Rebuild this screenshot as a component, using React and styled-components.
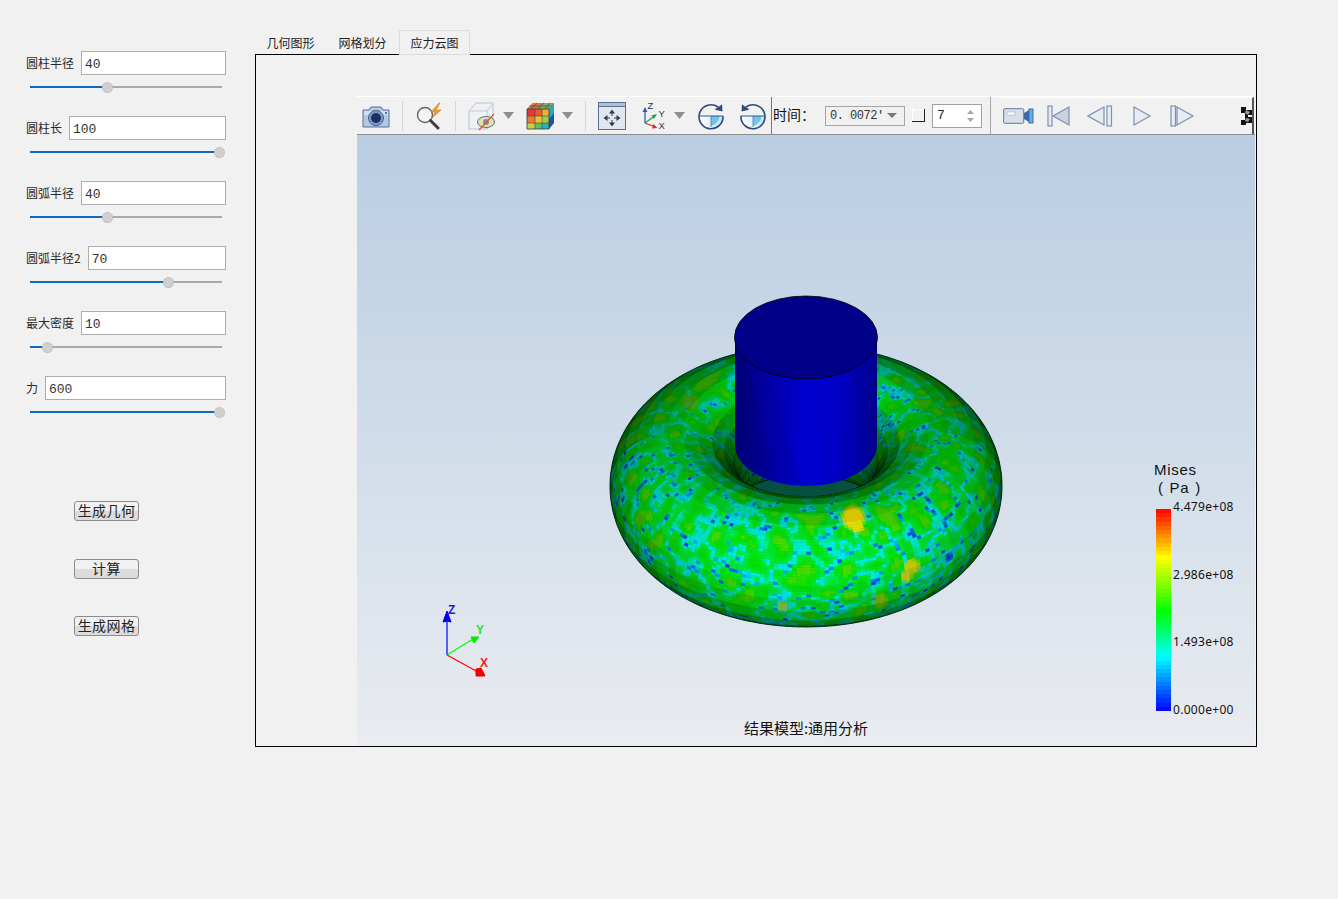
import React from "react";
import styled, { createGlobalStyle } from "styled-components";

const CJK = `"Noto Sans CJK SC", "Noto Sans", sans-serif`;
const MONO = `"Liberation Mono", "Noto Sans CJK SC", monospace`;

const Global = createGlobalStyle`
  html, body { margin: 0; padding: 0; background: #f1f1f1; height: 100%; }
  body { font-family: ${CJK}; color: #222; overflow: hidden; }
`;

const Page = styled.div`
  display: grid;
  grid-template-columns: 255px 1002px;
  width: 1338px;
  height: 899px;
`;
const Sidebar = styled.aside`
  display: flex;
  flex-direction: column;
  padding: 51px 0 0 26px;
  width: 200px;
`;
const Group = styled.div`
  display: flex;
  flex-direction: column;
  height: 65px;
`;
const Field = styled.label`
  display: flex;
  align-items: center;
  gap: 7px;
  height: 24px;
  font-size: 12px;
  line-height: 22px;
  color: #2a2a2a;
  white-space: nowrap;
`;
const FieldText = styled.span`
  margin-bottom: 1px;
`;
const NumInput = styled.input`
  flex: 1;
  min-width: 0;
  height: 24px;
  box-sizing: border-box;
  border: 1px solid #adadad;
  background: #fff;
  padding: 2px 3px 0;
  font: 13px ${MONO};
  color: #333;
  outline: none;
`;
const Slider = styled.div`
  position: relative;
  margin: 11px 0 0 4px;
  width: 192px;
  height: 2px;
  background: #a9a9a9;
`;
const SliderFill = styled.div`
  height: 100%;
  background: #0d6bbd;
`;
const SliderKnob = styled.div`
  position: absolute;
  top: -4.5px;
  margin-left: -5.5px;
  width: 11px;
  height: 11px;
  box-sizing: border-box;
  border-radius: 50%;
  background: #cfcfcf;
  border: 1px dotted #b5b5b5;
`;
const Actions = styled.div`
  display: flex;
  flex-direction: column;
  margin: 60px 0 0 48px;
`;
const ActionButton = styled.button`
  width: 65px;
  height: 20px;
  margin-bottom: ${(p) => p.$mb}px;
  padding: 0 0 2px;
  box-sizing: border-box;
  border: 1px solid #8c8c8c;
  border-radius: 3px;
  background: linear-gradient(#f1f1f1 0 50%, #dcdcdc 50% 100%);
  font: 14px/15px ${CJK};
  letter-spacing: 0.4px;
  color: #222;
`;

const Main = styled.main`
  display: flex;
  flex-direction: column;
  padding-top: 30px;
`;
const Tabs = styled.div`
  display: flex;
  height: 24px;
  position: relative;
  z-index: 1;
`;
const Tab = styled.div`
  width: 71px;
  margin-right: 1px;
  height: ${(p) => (p.$active ? 25 : 24)}px;
  box-sizing: border-box;
  text-align: center;
  font-size: 12px;
  color: #222;
  background: ${(p) => (p.$active ? "#f1f1f1" : "transparent")};
  border: ${(p) => (p.$active ? "1px solid #dcdcdc" : "none")};
  line-height: ${(p) => (p.$active ? 24 : 26)}px;
`;
const Frame = styled.section`
  box-sizing: border-box;
  height: 693px;
  border: 1px solid #000;
  padding: 41px 1px 0 101px;
  display: flex;
  flex-direction: column;
`;
const Toolbar = styled.div`
  display: flex;
  align-items: center;
  height: 39px;
  flex: none;
  box-sizing: border-box;
  border-top: 1px solid #fff;
  border-bottom: 1px solid #8d8d8d;
  background: #f1f1f1;
`;
const Tool = styled.div`
  flex: none;
  width: ${(p) => p.$w}px;
  margin-left: ${(p) => p.$ml}px;
  display: flex;
  align-items: center;
  justify-content: center;
  svg { display: block; }
`;
const Sep = styled.div`
  flex: none;
  width: 1px;
  height: 30px;
  margin-left: ${(p) => p.$ml}px;
  background: #d6d6d6;
`;
const Bar = styled.div`
  flex: none;
  align-self: stretch;
  width: 1px;
  margin-left: ${(p) => p.$ml}px;
  background: ${(p) => p.$c};
`;
const TimeLabel = styled.span`
  flex: none;
  width: 38px;
  margin: 0 0 3px 1px;
  font-size: 14px;
  line-height: 20px;
  color: #111;
  white-space: nowrap;
`;
const Combo = styled.div`
  flex: none;
  box-sizing: border-box;
  width: 80px;
  height: 20px;
  margin-left: 14px;
  border: 1px solid #a5a5a5;
  display: flex;
  align-items: center;
  justify-content: space-between;
  padding: 0 7px 0 4px;
  font: 12px ${MONO};
  letter-spacing: -0.5px;
  color: #333;
  white-space: pre;
  overflow: hidden;
`;
const ComboArrow = styled.i`
  flex: none;
  width: 0;
  height: 0;
  border-left: 5px solid transparent;
  border-right: 5px solid transparent;
  border-top: 5px solid #777;
`;
const Check = styled.div`
  flex: none;
  box-sizing: border-box;
  width: 13px;
  height: 13px;
  margin-left: 7px;
  border-right: 1.5px solid #222;
  border-bottom: 1.5px solid #222;
  box-shadow: inset 1px 1px 0 #fff;
`;
const Spin = styled.div`
  flex: none;
  box-sizing: border-box;
  width: 50px;
  height: 24px;
  margin-left: 7px;
  background: #fff;
  border: 1px solid #a0a0a0;
  display: flex;
  align-items: center;
  justify-content: space-between;
  padding: 0 7px 0 4px;
  font: 13px ${MONO};
  color: #222;
`;
const PlayBar = styled.div`
  flex: 1;
  align-self: stretch;
  margin-left: 8px;
  display: flex;
  align-items: center;
  border-top: 1px solid #fff;
  border-right: 2px solid #555;
  margin-right: 1px;
`;

const Viewport = styled.div`
  position: relative;
  flex: 1;
  background: linear-gradient(#b9cde3, #e9ecf0);
  overflow: hidden;
`;
const Scene = styled.svg`
  position: absolute;
  inset: 0;
  width: 100%;
  height: 100%;
`;
const Caption = styled.div`
  position: absolute;
  left: 0;
  right: 0;
  bottom: 8px;
  text-align: center;
  font-size: 15px;
  line-height: 20px;
  color: #111;
`;
const Legend = styled.div`
  position: absolute;
  left: 797px;
  top: 326px;
  display: flex;
  flex-direction: column;
  color: #111;
`;
const LegendTitle = styled.div`
  font-family: "Liberation Sans", sans-serif;
  font-size: 15px;
  letter-spacing: 0.7px;
  line-height: 17.5px;
  padding-left: ${(p) => p.$indent}px;
  word-spacing: 1px;
  white-space: nowrap;
`;
const LegendBody = styled.div`
  display: flex;
  height: 202px;
  margin: 13px 0 0 2px;
  font-family: "Noto Sans", sans-serif;
`;
const LegendBar = styled.div`
  width: 15px;
  height: 100%;
`;
const LegendTicks = styled.div`
  display: flex;
  flex-direction: column;
  justify-content: space-between;
  margin: -8px 0 -5px 2px;
  font-size: 12px;
  line-height: 12px;
  letter-spacing: 0.3px;
`;

/* ---------- torus mesh ---------- */
const hash3 = (i, j, k) => {
  const s = Math.sin(i * 127.1 + j * 311.7 + k * 74.7) * 43758.5453;
  return s - Math.floor(s);
};
const smooth = (f) => f * f * (3 - 2 * f);
const noise3 = (x, y, z) => {
  const i = Math.floor(x), j = Math.floor(y), k = Math.floor(z);
  const fx = smooth(x - i), fy = smooth(y - j), fz = smooth(z - k);
  const lerp = (a, b, t) => a + (b - a) * t;
  return lerp(
    lerp(
      lerp(hash3(i, j, k), hash3(i + 1, j, k), fx),
      lerp(hash3(i, j + 1, k), hash3(i + 1, j + 1, k), fx),
      fy
    ),
    lerp(
      lerp(hash3(i, j, k + 1), hash3(i + 1, j, k + 1), fx),
      lerp(hash3(i, j + 1, k + 1), hash3(i + 1, j + 1, k + 1), fx),
      fy
    ),
    fz
  );
};
const field = (X, Y, Z) => {
  // rotated domain so the lattice does not show
  const x = 0.71 * X + 0.55 * Y - 0.43 * Z;
  const y = -0.63 * X + 0.77 * Y + 0.1 * Z;
  const z = 0.31 * X + 0.32 * Y + 0.89 * Z;
  return (
    noise3(x / 15 + 11, y / 15 + 5, z / 15 + 3) * 0.78 +
    noise3(y / 7 + 2, z / 7 + 9, x / 7 + 4) * 0.22
  );
};
const STOPS = [
  [0, [20, 50, 225]],
  [0.014, [0, 110, 228]],
  [0.05, [0, 225, 238]],
  [0.11, [0, 235, 220]],
  [0.24, [0, 228, 60]],
  [0.75, [0, 222, 0]],
  [1, [70, 215, 0]],
];
const ramp = (t) => {
  for (let k = 1; k < STOPS.length; k++) {
    if (t <= STOPS[k][0]) {
      const [a, ca] = STOPS[k - 1];
      const [b, cb] = STOPS[k];
      const f = (t - a) / (b - a);
      return ca.map((c, n) => c + (cb[n] - c) * f);
    }
  }
  return STOPS[STOPS.length - 1][1];
};
const HOT = [
  [853, 518, 14, [250, 225, 0], 1],
  [857, 527, 8, [225, 230, 0], 1],
  [912, 566, 9, [215, 215, 0], 1],
  [906, 576, 7, [225, 210, 0], 0.9],
  [783, 606, 6, [200, 195, 0], 0.7],
  [880, 600, 9, [180, 195, 0], 0.6],
  [690, 402, 10, [160, 175, 0], 0.5],
];
const R = 131, r = 65, CX = 806, CY = 486;
const sinT = 0.58, cosT = Math.sqrt(1 - sinT * sinT);
const buildTorus = () => {
  const NU = 260, NV = 130, FU = 44, FV = 26;
  const project = (u, v) => {
    const w = R + r * Math.cos(v);
    const X = w * Math.cos(u), Y = w * Math.sin(u), Z = r * Math.sin(v);
    return [CX + X, CY + Y * sinT - Z * cosT, Y * cosT + Z * sinT];
  };
  const polys = [];
  for (let i = 0; i < NU; i++) {
    for (let j = 0; j < NV; j++) {
      const u0 = (i / NU) * 2 * Math.PI, u1 = ((i + 1) / NU) * 2 * Math.PI;
      const v0 = (j / NV) * 2 * Math.PI, v1 = ((j + 1) / NV) * 2 * Math.PI;
      const um = (u0 + u1) / 2, vm = (v0 + v1) / 2;
      const facing = Math.cos(vm) * Math.sin(um) * cosT + Math.sin(vm) * sinT;
      if (facing < -0.08) continue;
      const a = project(u0, v0), b = project(u1, v0), c = project(u1, v1), d = project(u0, v1);
      const sx = (a[0] + c[0]) / 2, sy = (a[1] + c[1]) / 2;
      if (sx > 742 && sx < 870 && sy < 470) continue;
      // flat shading over a coarse facet grid
      const fu = (Math.floor((i / NU) * FU) + 0.5) / FU * 2 * Math.PI;
      const fv = (Math.floor((j / NV) * FV) + 0.5) / FV * 2 * Math.PI;
      const nx = Math.cos(fv) * Math.cos(fu);
      const ny = Math.cos(fv) * Math.sin(fu);
      const nz = Math.sin(fv);
      const ndv = Math.max(0, ny * cosT + nz * sinT);
      let shade = 0.14 + 0.92 * Math.pow(ndv, 0.72);
      const inner = Math.min(1, Math.max(0, (-Math.cos(fv) - 0.4) / 0.45));
      shade *= 1 - 0.3 * smooth(inner);
      if (ny < 0) shade *= 0.94;
      shade = Math.min(1.02, shade);
      const w = R + r * Math.cos(vm);
      const n1 = field(w * Math.cos(um), w * Math.sin(um), r * Math.sin(vm));
      let t = Math.min(1, Math.abs(n1 - 0.5) * 3.4);
      if (ny < 0) t = Math.min(1, t + 0.08);
      let col = ramp(t);
      for (const [hx, hy, hr, hc, hw] of HOT) {
        const dd = Math.hypot(sx - hx, sy - hy) / hr;
        if (dd < 1) {
          const mix = hw * Math.min(1, (1 - dd) * 2.6);
          col = col.map((q, n) => q + (hc[n] - q) * mix);
        }
      }
      const [rr, gg, bb] = col.map((q) => Math.round(Math.min(255, q * shade)));
      polys.push({
        z: (a[2] + c[2]) / 2,
        p: [a, b, c, d].map((q) => `${q[0].toFixed(1)},${q[1].toFixed(1)}`).join(" "),
        f: `rgb(${rr},${gg},${bb})`,
      });
    }
  }
  polys.sort((p, q) => p.z - q.z);
  return polys;
};
const TORUS = buildTorus();

// silhouette: parallel curve of the projected centre circle
const OUTLINE = Array.from({ length: 240 }, (_, i) => {
  const a = (i / 240) * 2 * Math.PI;
  const ex = R * Math.cos(a), ey = R * sinT * Math.sin(a);
  const nx = sinT * Math.cos(a), ny = Math.sin(a);
  const l = Math.hypot(nx, ny);
  return `${(CX + ex + (r * nx) / l).toFixed(1)},${(CY + ey + (r * ny) / l).toFixed(1)}`;
}).join(" ");

const rainbow = (t) => {
  const k = [
    [0, [0, 0, 255]],
    [0.27, [0, 255, 255]],
    [0.49, [0, 255, 0]],
    [0.76, [255, 255, 0]],
    [1, [255, 0, 0]],
  ];
  for (let i = 1; i < k.length; i++) {
    if (t <= k[i][0]) {
      const f = (t - k[i - 1][0]) / (k[i][0] - k[i - 1][0]);
      return k[i - 1][1].map((c, n) => Math.round(c + (k[i][1][n] - c) * f));
    }
  }
  return [255, 0, 0];
};
const BANDS = 48;
const LEGEND_BG = `linear-gradient(to top, ${Array.from({ length: BANDS }, (_, i) => {
  const c = rainbow((i + 0.5) / BANDS);
  return `rgb(${c}) ${(i / BANDS) * 100}% ${((i + 1) / BANDS) * 100}%`;
}).join(", ")})`;

/* ---------- scene ---------- */
const ModelScene = () => (
  <Scene viewBox="357 135 898 611">
    <defs>
      <linearGradient id="cylSide" x1="0" x2="1" y1="0" y2="0">
        <stop offset="0" stopColor="#000078" />
        <stop offset="0.18" stopColor="#0000a0" />
        <stop offset="0.5" stopColor="#0000d2" />
        <stop offset="0.8" stopColor="#0000b8" />
        <stop offset="1" stopColor="#00008a" />
      </linearGradient>
      <clipPath id="torusClip">
        <polygon points={OUTLINE} />
      </clipPath>
      <filter id="soft" x="-5%" y="-5%" width="110%" height="110%">
        <feGaussianBlur stdDeviation="0.7" />
      </filter>
    </defs>
    <polygon points={OUTLINE} fill="#04402e" />
    <g clipPath="url(#torusClip)">
      <ellipse cx="806" cy="450" rx="100" ry="46" fill="#07503f" />
      <g filter="url(#soft)">
        {TORUS.map((q, i) => (
          <polygon key={i} points={q.p} fill={q.f} stroke={q.f} strokeWidth="0.6" />
        ))}
      </g>
    </g>
    <polygon points={OUTLINE} fill="none" stroke="#06301f" strokeWidth="1" />
    <path d="M735 337V445A71 41 0 0 0 877 445V337Z" fill="url(#cylSide)" />
    <polygon points="735,345 750,372 775,480 752,470 737,455" fill="#000070" opacity="0.35" />
    <polygon points="750,372 770,378 800,484 775,480" fill="#000090" opacity="0.25" />
    <polygon points="820,378 850,372 835,480 812,484" fill="#0000e0" opacity="0.25" />
    <ellipse cx="806" cy="337.5" rx="71.5" ry="41.5" fill="#000088" stroke="#000" strokeWidth="0.8" />

    {/* axis triad */}
    <g fill="none" strokeWidth="1.2">
      <path d="M447 655V618" stroke="#0000ff" />
      <path d="M447 655L473 639" stroke="#00ff00" />
      <path d="M447 655L478 672" stroke="#ff0000" />
    </g>
    <path d="M447 611L451 622L447 621L443 622Z" fill="#0000f0" stroke="#0000f0" />
    <path d="M471 637L479 637L474 643Z" fill="#00ee00" stroke="#00ee00" />
    <path d="M476 669L481 668L485 676L476 676Z" fill="#f00000" stroke="#f00000" />
    <g fontFamily="'Liberation Sans', sans-serif" fontWeight="700" fontSize="12">
      <text x="448" y="614" fill="#1a1ae0">Z</text>
      <text x="476" y="634" fill="#22e822">Y</text>
      <text x="480" y="667" fill="#f02020">X</text>
    </g>
  </Scene>
);

/* ---------- toolbar icons ---------- */
const CameraIcon = () => (
  <svg width="30" height="26" viewBox="0 0 30 26">
    <path d="M2 7h6l2-3h10l2 3h6v17H2z" fill="#b4c8e2" stroke="#54709c" strokeLinejoin="round" />
    <path d="M3 8h24v4H3z" fill="#d3e0f0" />
    <circle cx="15" cy="15" r="7.6" fill="#7f99c2" stroke="#4f6894" />
    <circle cx="15" cy="15" r="5" fill="#1b2f66" />
    <circle cx="25" cy="10" r="1" fill="#3d5580" />
  </svg>
);
const SearchIcon = () => (
  <svg width="31" height="28" viewBox="0 0 31 28">
    <circle cx="11" cy="13" r="7.5" fill="#f1f3f5" stroke="#666" strokeWidth="1.4" />
    <path d="M16.5 18.5L24 26" stroke="#3c3c3c" strokeWidth="3" strokeLinecap="round" />
    <path d="M25 1L17 10h4l-3 6 9-8h-5l4-7z" fill="#eb9c32" stroke="#c97a18" strokeWidth="0.5" />
  </svg>
);
const BoxEyeIcon = () => (
  <svg width="31" height="30" viewBox="0 0 31 30">
    <path d="M2 10L9 2H26V21L20 28H2Z" fill="#eef1f5" stroke="#bcc3ce" />
    <path d="M2 10H20V28M20 10L26 2" fill="none" stroke="#c4cad4" />
    <ellipse cx="19" cy="21" rx="8.5" ry="5.5" fill="#e9dfa8" stroke="#5d6f8c" />
    <ellipse cx="19" cy="21" rx="3" ry="3" fill="#7f8fa8" />
    <path d="M12 29L27 13" stroke="#d8552a" strokeWidth="1.1" />
  </svg>
);
const CubeIcon = () => (
  <svg width="29" height="28" viewBox="0 0 29 28">
    <path d="M1 7L7 1H28L23 7Z" fill="#7fae4f" />
    <path d="M4 4L7 1H17L13 7H1Z" fill="#d8763a" />
    <path d="M23 7L28 1V21L23 27Z" fill="#1b53a8" />
    <path d="M23 7L28 1V11L23 17Z" fill="#35a2c4" />
    <rect x="1" y="7" width="22" height="20" fill="#e5c83a" />
    <rect x="1" y="7" width="8" height="7" fill="#e2383a" />
    <rect x="9" y="7" width="7" height="7" fill="#ea5a30" />
    <rect x="16" y="7" width="7" height="7" fill="#efb030" />
    <rect x="1" y="14" width="8" height="7" fill="#ef7a30" />
    <rect x="9" y="14" width="7" height="7" fill="#efc030" />
    <rect x="16" y="14" width="7" height="7" fill="#9ed040" />
    <rect x="1" y="21" width="8" height="6" fill="#c8d040" />
    <rect x="9" y="21" width="7" height="6" fill="#59c25c" />
    <rect x="16" y="21" width="7" height="6" fill="#2eb0b2" />
    <path d="M9 7V27M16 7V27M1 14H23M1 21H23M5 7L11 1M12 7L18 1M19 7L24 1M3 4H25" stroke="#3a4450" strokeWidth="0.6" fill="none" />
    <path d="M1 7H23V27H1Z" fill="none" stroke="#2f3a48" strokeWidth="0.8" />
  </svg>
);
const Caret = () => (
  <svg width="11" height="7" viewBox="0 0 11 7">
    <path d="M0 0H11L5.5 7Z" fill="#8e8e8e" />
  </svg>
);
const FitIcon = () => (
  <svg width="28" height="28" viewBox="0 0 28 28">
    <rect x="0.5" y="0.5" width="27" height="27" fill="#e2e7ee" stroke="#5c6f90" />
    <rect x="1" y="1" width="26" height="3.5" fill="#b3c0d3" />
    <path d="M0.5 4.5H27.5" stroke="#5c6f90" />
    <path d="M14 7.5L11 11.5H17ZM14 24.5L11 20.5H17ZM5.5 16L9.5 13V19ZM22.5 16L18.5 13V19Z" fill="#2b3a55" />
    <path d="M14 11V14M14 18V21M9 16H12M16 16H19" stroke="#2b3a55" strokeWidth="1" fill="none" />
  </svg>
);
const AxesIcon = () => (
  <svg width="26" height="30" viewBox="0 0 26 30">
    <path d="M3 22V9" stroke="#2f5fb5" strokeWidth="1.3" />
    <path d="M3 6L0.5 11H5.5Z" fill="#2f5fb5" />
    <path d="M3 22L12 15.5" stroke="#2a9a4a" strokeWidth="1.3" />
    <path d="M15 13L9.5 14.5L12 18Z" fill="#2a9a4a" />
    <path d="M3 22L12 25.5" stroke="#e02a2a" strokeWidth="1.3" />
    <path d="M15.5 27L10 27.5L11.5 23Z" fill="#e02a2a" />
    <g fontFamily="'Liberation Sans', sans-serif" fontSize="9.5" fill="#333">
      <text x="5.5" y="8">Z</text>
      <text x="16.5" y="15.5">Y</text>
      <text x="16.5" y="28">X</text>
    </g>
  </svg>
);
const RotateIcon = ({ flip, fillId }) => (
  <svg width="29" height="28" viewBox="0 0 29 28">
    <defs>
      <linearGradient id={fillId} x1="0" x2="1" y1="0" y2="0">
        <stop offset="0" stopColor="#ffffff" />
        <stop offset="1" stopColor="#bfe2f7" />
      </linearGradient>
    </defs>
    <path d="M2 14A12 12 0 0 0 26 14Z" fill={`url(#${fillId})`} />
    <path d="M14 14h8.5a12 12 0 0 1-8.5 10Z" fill="#5ab8ea" opacity="0.8" />
    <path d="M2 14H26" stroke="#2d5a88" strokeWidth="1" />
    <path d="M14 14V25" stroke="#2d5a88" strokeWidth="0.6" />
    <g transform={flip ? "translate(28 0) scale(-1 1)" : undefined}>
      <path d="M21 5A12 12 0 1 0 26 14" fill="none" stroke="#2d4a78" strokeWidth="1.6" />
      <path d="M25 2.5L25.5 9.5L17.5 7.5Z" fill="#2d4a78" />
    </g>
  </svg>
);
const SpinArrows = () => (
  <svg width="7" height="14" viewBox="0 0 7 14">
    <path d="M3.5 1L7 5H0ZM3.5 13L7 9H0Z" fill="#a8a8a8" />
  </svg>
);
const MovieIcon = () => (
  <svg width="31" height="18" viewBox="0 0 31 18">
    <rect x="0.7" y="1.7" width="20" height="14.6" rx="1" fill="#d8dfe9" stroke="#64789a" />
    <rect x="4" y="5" width="8" height="3" fill="#fff" stroke="#93a3ba" strokeWidth="0.5" />
    <path d="M21 6L26 3V15L21 12Z" fill="#3f6aa8" />
    <rect x="26" y="2" width="4" height="14" fill="#58b5e8" stroke="#3f6aa8" />
  </svg>
);
const StepStroke = { fill: "#e6ecf4", stroke: "#7d90ae", strokeWidth: 1.2 };
const FirstIcon = () => (
  <svg width="24" height="22" viewBox="0 0 24 22">
    <rect x="1" y="1" width="4" height="20" {...StepStroke} />
    <path d="M22 2V20L6 11Z" {...StepStroke} fill="#c8d2e0" />
  </svg>
);
const PrevIcon = () => (
  <svg width="26" height="22" viewBox="0 0 26 22">
    <path d="M17 2V20L1 11Z" {...StepStroke} />
    <rect x="20" y="1" width="4.5" height="20" {...StepStroke} />
  </svg>
);
const PlayIcon = () => (
  <svg width="20" height="22" viewBox="0 0 20 22">
    <path d="M2 2V20L18 11Z" {...StepStroke} />
  </svg>
);
const NextIcon = () => (
  <svg width="25" height="22" viewBox="0 0 25 22">
    <rect x="1" y="1" width="4.5" height="20" {...StepStroke} />
    <path d="M7 2V20L23 11Z" {...StepStroke} />
  </svg>
);
const HandleIcon = () => (
  <svg width="11" height="18" viewBox="0 0 11 18">
    <path d="M0 0H5V3L11 3V8H7V10H11V16H5V18H0V13H4V6H0Z" fill="#111" />
    <path d="M5 3L9 5L7 8L4 6ZM5 11L9 12L7 15L4 14Z" fill="#999" />
  </svg>
);

const FIELDS = [
  { label: "圆柱半径", value: "40", knob: 77 },
  { label: "圆柱长", value: "100", knob: 189 },
  { label: "圆弧半径", value: "40", knob: 77 },
  { label: "圆弧半径2", value: "70", knob: 138 },
  { label: "最大密度", value: "10", knob: 17 },
  { label: "力", value: "600", knob: 189 },
];
const ACTIONS = [
  { text: "生成几何", mb: 38 },
  { text: "计算", mb: 37 },
  { text: "生成网格", mb: 0 },
];

export default function App() {
  return (
    <>
      <Global />
      <Page>
        <Sidebar>
          {FIELDS.map((f) => (
            <Group key={f.label}>
              <Field>
                <FieldText>{f.label}</FieldText>
                <NumInput value={f.value} readOnly />
              </Field>
              <Slider>
                <SliderFill style={{ width: f.knob }} />
                <SliderKnob style={{ left: f.knob }} />
              </Slider>
            </Group>
          ))}
          <Actions>
            {ACTIONS.map((a) => (
              <ActionButton key={a.text} $mb={a.mb}>
                {a.text}
              </ActionButton>
            ))}
          </Actions>
        </Sidebar>
        <Main>
          <Tabs>
            <Tab>几何图形</Tab>
            <Tab>网格划分</Tab>
            <Tab $active>应力云图</Tab>
          </Tabs>
          <Frame>
            <Toolbar>
              <Tool $w={30} $ml={4}><CameraIcon /></Tool>
              <Sep $ml={11} />
              <Tool $w={31} $ml={11}><SearchIcon /></Tool>
              <Sep $ml={10} />
              <Tool $w={31} $ml={11}><BoxEyeIcon /></Tool>
              <Tool $w={11} $ml={5}><Caret /></Tool>
              <Tool $w={29} $ml={12}><CubeIcon /></Tool>
              <Tool $w={11} $ml={7}><Caret /></Tool>
              <Sep $ml={12} />
              <Tool $w={30} $ml={11}><FitIcon /></Tool>
              <Tool $w={26} $ml={15}><AxesIcon /></Tool>
              <Tool $w={11} $ml={6}><Caret /></Tool>
              <Tool $w={29} $ml={12}><RotateIcon fillId="rotA" /></Tool>
              <Tool $w={29} $ml={13}><RotateIcon flip fillId="rotB" /></Tool>
              <Bar $ml={3} $c="#777" />
              <TimeLabel>时间：</TimeLabel>
              <Combo>
                {"0. 0072'"}
                <ComboArrow />
              </Combo>
              <Check />
              <Spin>
                7
                <SpinArrows />
              </Spin>
              <Bar $ml={8} $c="#a8a8a8" />
              <PlayBar>
                <Tool $w={31} $ml={4}><MovieIcon /></Tool>
                <Tool $w={24} $ml={13}><FirstIcon /></Tool>
                <Tool $w={26} $ml={16}><PrevIcon /></Tool>
                <Tool $w={20} $ml={19}><PlayIcon /></Tool>
                <Tool $w={25} $ml={18}><NextIcon /></Tool>
                <Tool $w={11} $ml={46}><HandleIcon /></Tool>
              </PlayBar>
            </Toolbar>
            <Viewport>
              <ModelScene />
              <Legend>
                <LegendTitle $indent={0}>Mises</LegendTitle>
                <LegendTitle $indent={4}>( Pa )</LegendTitle>
                <LegendBody>
                  <LegendBar style={{ background: LEGEND_BG }} />
                  <LegendTicks>
                    <span>4.479e+08</span>
                    <span>2.986e+08</span>
                    <span>1.493e+08</span>
                    <span>0.000e+00</span>
                  </LegendTicks>
                </LegendBody>
              </Legend>
              <Caption>结果模型:通用分析</Caption>
            </Viewport>
          </Frame>
        </Main>
      </Page>
    </>
  );
}
